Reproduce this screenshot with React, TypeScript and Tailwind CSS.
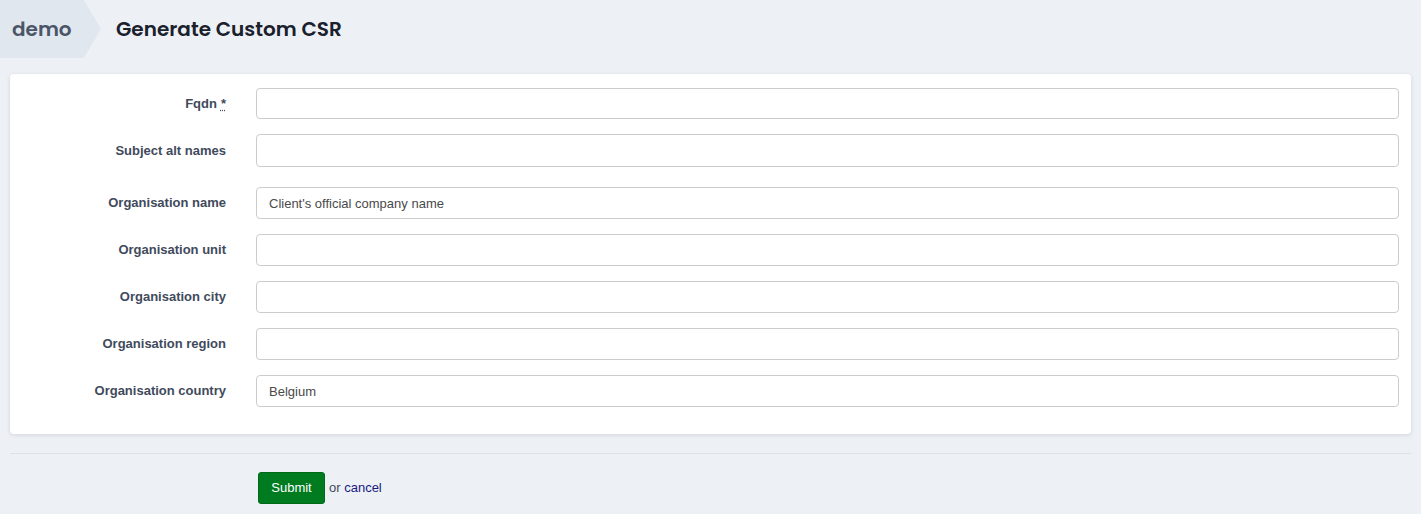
import React from "react";

const rows: { label: string; value?: string; required?: boolean }[] = [
  { label: "Fqdn", required: true },
  { label: "Subject alt names" },
  { label: "Organisation name", value: "Client's official company name" },
  { label: "Organisation unit" },
  { label: "Organisation city" },
  { label: "Organisation region" },
  { label: "Organisation country", value: "Belgium" },
];

export default function App() {
  return (
    <div className="min-h-[514px] bg-[#edf1f6] font-['Liberation_Sans',Arial,sans-serif]">
      <div className="flex h-[58px] items-center">
        <div className="flex h-full w-[101px] items-center bg-[#e1e7ef] pl-[12px] [clip-path:polygon(0_0,84px_0,101px_50%,84px_100%,0_100%)]">
          <span className="font-['Poppins','Inter',sans-serif] text-[20px] font-semibold text-[#4a5568]">demo</span>
        </div>
        <h1 className="ml-[15px] font-['Poppins','Inter',sans-serif] text-[20px] font-semibold text-[#1a202c]">
          Generate Custom CSR
        </h1>
      </div>
      <div className="mx-[10px] mt-[16px] rounded-[4px] bg-white pb-[27px] pt-[14px] pr-[12px] shadow-[0_1px_4px_rgba(0,0,0,0.12)]">
        {rows.map((r, i) => (
          <div
            key={r.label}
            className={`flex items-center ${i === 0 ? "" : i === 1 ? "mt-[15px]" : i === 2 ? "mt-[20px]" : "mt-[15px]"}`}
          >
            <label className="w-[216px] shrink-0 text-right text-[13px] font-bold text-[#3f4a5c]">
              {r.label}
              {r.required && (
                <span className="ml-[4px] underline decoration-dotted underline-offset-2">*</span>
              )}
            </label>
            <input
              readOnly
              value={r.value ?? ""}
              className={`ml-[30px] flex-1 rounded-[4px] border border-[#cccccc] bg-white px-[12px] text-[13px] text-[#4a4a4a] outline-none ${i === 0 ? "h-[31px]" : i === 1 ? "h-[33px]" : "h-[32px]"}`}
            />
          </div>
        ))}
      </div>
      <div className="mx-[10px] mt-[19px] border-t border-[#dde2e8] pl-[248px] pt-[18px]">
        <div className="flex items-center">
          <button className="h-[32px] w-[67px] rounded-[3px] border border-[#006a18] bg-[#007b20] text-[13px] text-white">
            Submit
          </button>
          <span className="ml-[4px] text-[13px] text-[#3f4a5c]">
            or <a className="text-[#1a1a80]">cancel</a>
          </span>
        </div>
      </div>
    </div>
  );
}
